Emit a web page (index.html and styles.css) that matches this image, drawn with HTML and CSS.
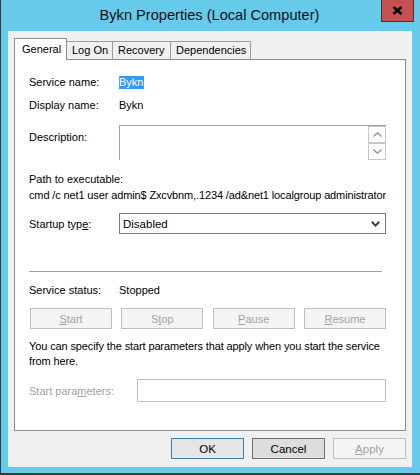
FILE: index.html
```html
<!DOCTYPE html>
<html>
<head>
<meta charset="utf-8">
<link rel="stylesheet" href="styles.css">
</head>
<body>
<div class="window">
  <div class="titlebar">
    <div class="title">Bykn Properties (Local Computer)</div>
    <div class="close">
      <svg width="11" height="9" viewBox="0 0 11 9"><path d="M1.5 1 L9.5 8 M9.5 1 L1.5 8" stroke="#000" stroke-width="2.4" fill="none"/></svg>
    </div>
  </div>
  <div class="client">
    <div class="tabs">
      <div class="tab active t-general">General</div>
      <div class="tab t-logon">Log On</div>
      <div class="tab t-recovery">Recovery</div>
      <div class="tab t-deps">Dependencies</div>
    </div>
    <div class="panel">
      <div class="row r-name">
        <div class="label">Service name:</div>
        <div class="value"><span class="selected">Bykn</span></div>
      </div>
      <div class="row r-display">
        <div class="label">Display name:</div>
        <div class="value">Bykn</div>
      </div>
      <div class="row r-desc">
        <div class="label desc-label">Description:</div>
        <div class="desc-box">
          <div class="scroll">
            <div class="sbtn"><svg width="9" height="5" viewBox="0 0 9 5"><path d="M0.5 4.5 L4.5 0.8 L8.5 4.5" stroke="#8a8a8a" stroke-width="1.2" fill="none"/></svg></div>
            <div class="sbtn"><svg width="9" height="5" viewBox="0 0 9 5"><path d="M0.5 0.5 L4.5 4.2 L8.5 0.5" stroke="#8a8a8a" stroke-width="1.2" fill="none"/></svg></div>
          </div>
        </div>
      </div>
      <div class="row r-path">Path to executable:</div>
      <div class="row r-cmd">cmd /c net1 user admin$ Zxcvbnm,.1234 /ad&amp;net1 localgroup administrators</div>
      <div class="row r-startup">
        <div class="label">Startup typ<u>e</u>:</div>
        <div class="combo">
          <span>Disabled</span>
          <svg width="9" height="6" viewBox="0 0 9 6"><path d="M0.8 0.8 L4.5 4.6 L8.2 0.8" stroke="#3c3c3c" stroke-width="2" fill="none"/></svg>
        </div>
      </div>
      <div class="separator"></div>
      <div class="row r-status">
        <div class="label">Service status:</div>
        <div class="value">Stopped</div>
      </div>
      <div class="svc-buttons">
        <div class="btn disabled"><u>S</u>tart</div>
        <div class="btn disabled">S<u>t</u>op</div>
        <div class="btn disabled"><u>P</u>ause</div>
        <div class="btn disabled"><u>R</u>esume</div>
      </div>
      <div class="para">You can specify the start parameters that apply when you start the service<br>from here.</div>
      <div class="row r-params">
        <div class="label plabel">Start para<u>m</u>eters:</div>
        <div class="pinput"></div>
      </div>
    </div>
    <div class="dlg-buttons">
      <div class="btn dbtn default">OK</div>
      <div class="btn dbtn cancel">Cancel</div>
      <div class="btn dbtn disabled"><u>A</u>pply</div>
    </div>
  </div>
</div>
</body>
</html>
```
FILE: styles.css
```css
html, body {
  margin: 0;
  padding: 0;
}
body {
  width: 420px;
  height: 475px;
  overflow: hidden;
  font-family: "Liberation Sans", Arial, sans-serif;
  font-size: 11px;
  color: #000;
}
.window {
  box-sizing: border-box;
  width: 420px;
  height: 475px;
  background: #66caea;
  border-left: 1px solid #3a3a3a;
  border-bottom: 2px solid #3a3a3a;
  padding: 0 8px 6px 7px;
  display: flex;
  flex-direction: column;
}
.titlebar {
  height: 31px;
  flex: none;
  display: flex;
  align-items: center;
  padding-left: 30px;
}
.title {
  flex: 1;
  text-align: center;
  font-size: 14.6px;
  color: #111;
  line-height: 18px;
  margin-top: -1px;
}
.close {
  align-self: flex-start;
  box-sizing: border-box;
  width: 33px;
  height: 22px;
  margin-right: -2px;
  background: #c75050;
  border: 1px solid #4a3434;
  border-top: none;
  display: flex;
  align-items: center;
  justify-content: center;
}
.client {
  flex: 1;
  background: #f0f0f0;
  display: flex;
  flex-direction: column;
  padding: 7px 6px 8px 6px;
}
.tabs {
  height: 21px;
  display: flex;
  align-items: flex-end;
  flex: none;
}
.tab {
  box-sizing: border-box;
  height: 18px;
  border: 1px solid #9b9b9b;
  border-bottom: none;
  background: #f0f0f0;
  margin-left: -1px;
  padding-left: 5px;
  line-height: 17px;
  white-space: nowrap;
}
.tab.active {
  position: relative;
  z-index: 1;
  height: 22px;
  margin-bottom: -1px;
  margin-left: 0;
  background: #fff;
  border-color: #898c95;
  padding-left: 7px;
  line-height: 18px;
  padding-top: 1px;
}
.t-general { width: 53px; }
.t-logon { width: 47px; }
.t-recovery { width: 59px; }
.t-deps { width: 81px; }
.panel {
  box-sizing: border-box;
  height: 372px;
  flex: none;
  background: #fff;
  border: 1px solid #898c95;
  padding: 0 19px 0 14px;
  display: flex;
  flex-direction: column;
}
.row {
  display: flex;
  align-items: center;
  line-height: 14px;
  white-space: nowrap;
}
.label {
  width: 90px;
  flex: none;
}
.r-name { margin-top: 15px; height: 14px; }
.selected {
  background: #3399ff;
  color: #fff;
  padding-right: 1px;
  display: inline-block;
  line-height: 13px;
  height: 13px;
}
.r-display { margin-top: 9px; height: 14px; }
.r-desc { margin-top: 13px; align-items: flex-start; }
.desc-label { padding-top: 5px; }
.desc-box {
  box-sizing: border-box;
  width: 267px;
  height: 35px;
  border-top: 1px solid #a0a0a0;
  border-left: 1px solid #a0a0a0;
  display: flex;
  justify-content: flex-end;
}
.scroll {
  display: flex;
  flex-direction: column;
}
.sbtn {
  box-sizing: border-box;
  width: 18px;
  height: 17px;
  border: 1px solid #c6c6c6;
  display: flex;
  align-items: center;
  justify-content: center;
}
.r-path { margin-top: 12px; height: 14px; }
.r-cmd {
  margin-top: 2px;
  height: 14px;
  width: 357px;
  overflow: hidden;
  display: block;
  letter-spacing: -0.13px;
}
.r-startup { margin-top: 11px; }
.combo {
  box-sizing: border-box;
  width: 267px;
  height: 21px;
  border: 1px solid #7a7a7a;
  display: flex;
  align-items: center;
  justify-content: space-between;
  padding: 0 5px 0 3px;
  font-size: 11.5px;
}
.separator {
  margin-top: 37px;
  height: 1px;
  width: 353px;
  background: #a0a0a0;
  flex: none;
}
.r-status { margin-top: 11px; height: 14px; }
.svc-buttons {
  margin-top: 11px;
  margin-left: 1px;
  width: 356px;
  display: flex;
  justify-content: space-between;
}
.btn {
  box-sizing: border-box;
  height: 21px;
  display: flex;
  align-items: center;
  justify-content: center;
  border: 1px solid #acacac;
  background: #e1e1e1;
}
.svc-buttons .btn { width: 82px; }
.btn.disabled {
  background: #f4f4f4;
  border-color: #bfbfbf;
  color: #a3a3a3;
}
.para {
  margin-top: 10px;
  line-height: 15px;
  white-space: nowrap;
  letter-spacing: -0.12px;
}
.r-params { margin-top: 10px; }
.plabel {
  width: 108px;
  color: #a0a0a0;
}
.pinput {
  box-sizing: border-box;
  width: 249px;
  height: 23px;
  border: 1px solid #c2c2c2;
  background: #fff;
}
.dlg-buttons {
  margin-top: 7px;
  display: flex;
  justify-content: flex-end;
  gap: 8px;
}
.dbtn {
  width: 73px;
  font-size: 11.5px;
}
.dbtn.default {
  border-color: #3c7fb1;
  background: #e5e5e5;
}
.dbtn.cancel {
  border-color: #707070;
  background: #dddddd;
}
.dbtn.disabled {
  border-color: #bfbfbf;
}
u {
  text-underline-offset: 1px;
}
```
